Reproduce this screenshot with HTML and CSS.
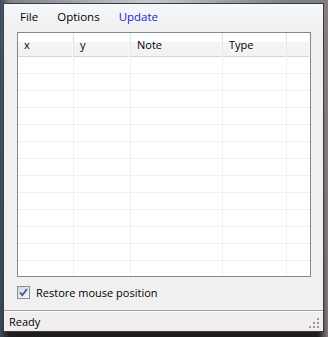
FILE: index.html
```html
<!DOCTYPE html>
<html lang="en">
<head>
  <meta charset="UTF-8" />
  <title>Mouse Points</title>
  <link rel="stylesheet" href="styles.css">
</head>
<body>

  <div class="window">
    <div class="menubar">
      <span class="menu-item">File</span>
      <span class="menu-item">Options</span>
      <span class="menu-item update">Update</span>
    </div>

    <div class="list">
      <div class="list-head">
        <div class="col">x</div>
        <div class="col">y</div>
        <div class="col">Note</div>
        <div class="col">Type</div>
        <div class="col filler"></div>
      </div>
      <div class="list-body" id="rows"></div>
    </div>

    <label class="check-row">
      <span class="checkbox">
        <svg width="13" height="13" viewBox="0 0 13 13">
          <path d="M3 6.5 L5.3 9.2 L10 3" fill="none" stroke="#3d4f8a" stroke-width="1.7"/>
        </svg>
      </span>
      Restore mouse position
    </label>

    <div class="statusbar">
      <span>Ready</span>
      <div class="grip">
        <i></i><i></i><i></i><i></i><i></i><i></i>
      </div>
    </div>
  </div>

  <script>
    // empty grid rows
    const rows = document.getElementById('rows');
    for (let i = 0; i < 13; i++) {
      const row = document.createElement('div');
      row.className = 'row';
      for (let c = 0; c < 5; c++) {
        const cell = document.createElement('div');
        cell.className = 'cell';
        row.appendChild(cell);
      }
      rows.appendChild(row);
    }
  </script>

</body>
</html>
```

FILE: styles.css
```css
body {
  margin: 0;
  width: 328px;
  height: 337px;
  overflow: hidden;
  font-family: "Open Sans", "Noto Sans", sans-serif;
  font-size: 11px;
  color: #000;
  background:
    radial-gradient(ellipse at 45% 0%, #c4c9cf 0%, rgba(160,165,170,0) 55%),
    linear-gradient(90deg, #3a4a5c 0%, rgba(0,0,0,0) 3%, rgba(0,0,0,0) 97%, #8a7c80 100%),
    linear-gradient(180deg, #7c8088 0%, #4a4c52 60%, #1c1c1e 100%);
}

.window {
  margin: 3px 0 0 3px;
  width: 319px;
  height: 327px;
  border: 1px solid #3a3c40;
  background: #f0f0f0;
  display: flex;
  flex-direction: column;
}

.menubar {
  height: 28px;
  display: flex;
  align-items: center;
  gap: 19px;
  padding-left: 16px;
  font-size: 11.5px;
  background: linear-gradient(#f6f7f9, #f0f0f0);
}

.menu-item {
  line-height: 16px;
  margin-top: -3px;
}

.update {
  color: #1c1cd8;
}

.list {
  margin-left: 13px;
  width: 292px;
  height: 243px;
  border: 1px solid #828790;
  background: #fff;
  overflow: hidden;
}

.list-head,
.row {
  display: grid;
  grid-template-columns: 56px 57px 92px 64px 1fr;
}

.list-head {
  height: 23px;
  border-bottom: 1px solid #d5d5d5;
  background: linear-gradient(#ffffff 0%, #ffffff 40%, #f3f4f6 41%, #f1f2f4 100%);
}

.col {
  padding-left: 6px;
  line-height: 24px;
  border-right: 1px solid #e3e5e8;
  box-shadow: inset -1px 0 0 #fafafa;
}

.filler {
  border-right: none;
}

.row {
  height: 16px;
  border-bottom: 1px solid #f0f0f0;
}

.cell {
  border-right: 1px solid #f0f0f0;
}

.cell:last-child {
  border-right: none;
}

.check-row {
  display: flex;
  align-items: center;
  gap: 6px;
  margin: 8px 0 0 13px;
  height: 14px;
}

.checkbox {
  width: 11px;
  height: 11px;
  border: 1px solid #8e8f8f;
  background: linear-gradient(135deg, #cfd6e2, #f6f8fb);
  position: relative;
}

.checkbox svg {
  position: absolute;
  left: -1px;
  top: -1px;
}

.statusbar {
  margin-top: auto;
  height: 20px;
  border-top: 1px solid #a0a0a0;
  box-shadow: inset 0 1px 0 #fbfbfb;
  background: #f1eeed;
  display: flex;
  align-items: center;
  padding-left: 5px;
  position: relative;
}

.grip {
  position: absolute;
  right: 4px;
  bottom: 3px;
  width: 10px;
  height: 10px;
  display: grid;
  grid-template-columns: repeat(3, 2px);
  grid-template-rows: repeat(3, 2px);
  gap: 2px;
}

.grip i {
  background: #9a9a9a;
}

.grip i:nth-child(1) { grid-area: 1 / 3; }
.grip i:nth-child(2) { grid-area: 2 / 2; }
.grip i:nth-child(3) { grid-area: 2 / 3; }
.grip i:nth-child(4) { grid-area: 3 / 1; }
.grip i:nth-child(5) { grid-area: 3 / 2; }
.grip i:nth-child(6) { grid-area: 3 / 3; }
```
